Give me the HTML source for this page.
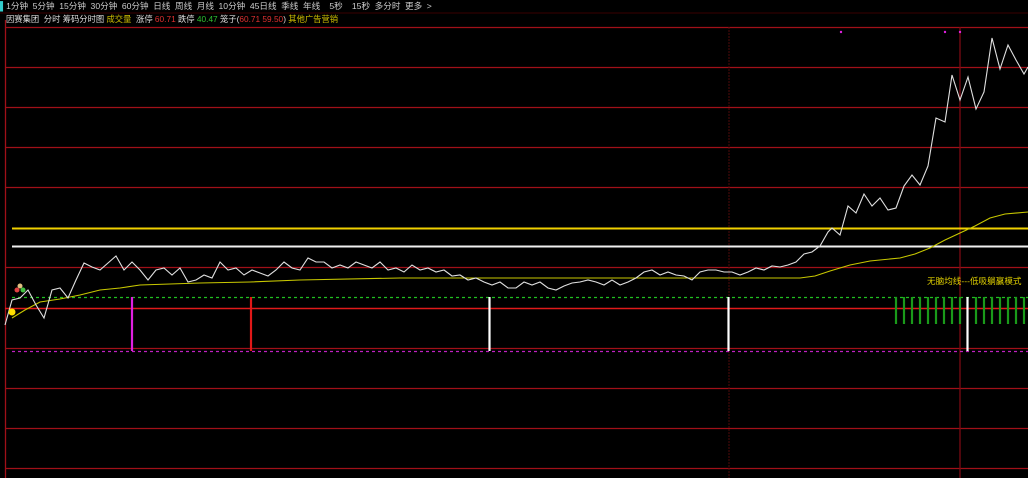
<!DOCTYPE html>
<html><head><meta charset="utf-8"><style>
html,body{margin:0;padding:0;background:#000;width:1028px;height:478px;overflow:hidden}
.t{position:absolute;font-family:"Liberation Sans","Noto Sans CJK SC",sans-serif;font-size:8.6px;white-space:nowrap;line-height:12px}
</style></head><body>
<svg width="1028" height="478" style="position:absolute;left:0;top:0" xmlns="http://www.w3.org/2000/svg">
<rect width="1028" height="478" fill="#000"/>
<line x1="0" y1="13" x2="1028" y2="13" stroke="#3a0000" stroke-width="1"/>
<g stroke="#a01018" stroke-width="1.3">
<line x1="5" y1="27.5" x2="1028" y2="27.5"/>
<line x1="5" y1="67.5" x2="1028" y2="67.5"/>
<line x1="5" y1="107.5" x2="1028" y2="107.5"/>
<line x1="5" y1="147.5" x2="1028" y2="147.5"/>
<line x1="5" y1="187.5" x2="1028" y2="187.5"/>
<line x1="5" y1="267.5" x2="1028" y2="267.5"/>
<line x1="5" y1="348.5" x2="1028" y2="348.5"/>
<line x1="5" y1="388.5" x2="1028" y2="388.5"/>
<line x1="5" y1="428.5" x2="1028" y2="428.5"/>
<line x1="5" y1="468.5" x2="1028" y2="468.5"/>
<line x1="5.5" y1="20" x2="5.5" y2="478"/>
</g>
<line x1="5" y1="308.5" x2="1028" y2="308.5" stroke="#e01a1a" stroke-width="1.4"/>
<line x1="729" y1="27" x2="729" y2="478" stroke="#500a0a" stroke-width="1" stroke-dasharray="2,1"/>
<line x1="960" y1="27" x2="960" y2="478" stroke="#7a0a12" stroke-width="1.3"/>
<line x1="12" y1="228.5" x2="1028" y2="228.5" stroke="#f0d000" stroke-width="2"/>
<line x1="12" y1="246.5" x2="1028" y2="246.5" stroke="#f0f0f0" stroke-width="2"/>
<line x1="12" y1="297.5" x2="1028" y2="297.5" stroke="#20c020" stroke-width="1.2" stroke-dasharray="3,3"/>
<line x1="12" y1="351.5" x2="1028" y2="351.5" stroke="#c020c0" stroke-width="1.2" stroke-dasharray="3,3"/>
<g stroke="#1a9a1a" stroke-width="2.2">
<line x1="896" y1="297" x2="896" y2="324"/><line x1="904" y1="297" x2="904" y2="324"/><line x1="912" y1="297" x2="912" y2="324"/><line x1="920" y1="297" x2="920" y2="324"/><line x1="928" y1="297" x2="928" y2="324"/><line x1="936" y1="297" x2="936" y2="324"/><line x1="944" y1="297" x2="944" y2="324"/><line x1="952" y1="297" x2="952" y2="324"/><line x1="960" y1="297" x2="960" y2="324"/><line x1="976" y1="297" x2="976" y2="324"/><line x1="984" y1="297" x2="984" y2="324"/><line x1="992" y1="297" x2="992" y2="324"/><line x1="1000" y1="297" x2="1000" y2="324"/><line x1="1008" y1="297" x2="1008" y2="324"/><line x1="1016" y1="297" x2="1016" y2="324"/><line x1="1024" y1="297" x2="1024" y2="324"/>
</g>
<g stroke-width="2.2">
<line x1="132" y1="297" x2="132" y2="351" stroke="#e020e0"/>
<line x1="251" y1="297" x2="251" y2="351" stroke="#e01818"/>
<line x1="489.5" y1="297" x2="489.5" y2="351" stroke="#fff"/>
<line x1="728.5" y1="297" x2="728.5" y2="351" stroke="#fff"/>
<line x1="967.5" y1="297" x2="967.5" y2="351" stroke="#fff"/>
</g>
<polyline fill="none" stroke="#c8c800" stroke-width="1.1" points="12,318 25,310 40,302 60,299 80,295 100,290 120,288 140,285 200,283 250,282 300,280 400,278 500,278 600,278 700,278 800,278 815,276 830,271 850,265 870,261 900,258 915,254 930,248 945,240 960,233 975,226 990,218 1005,214 1028,212"/>
<polyline fill="none" stroke="#e0e0e0" stroke-width="1.1" points="5,325 12,300 20,298 28,290 36,305 44,318 52,290 60,288 68,298 76,280 84,263 92,267 100,270 108,263 116,256 124,270 132,262 140,270 148,280 156,270 164,268 172,275 180,268 188,282 196,280 204,275 212,278 220,262 228,270 236,268 244,275 252,270 260,273 268,276 276,270 284,262 292,268 300,270 308,258 316,262 324,262 332,268 340,265 348,268 356,262 364,265 372,268 380,262 388,270 396,268 404,272 412,265 420,270 428,268 436,272 444,270 452,276 460,275 468,280 476,278 484,282 492,285 500,282 508,288 516,288 524,282 532,285 540,282 548,288 556,290 564,286 572,283 580,282 588,280 596,282 604,285 612,280 620,285 628,282 636,278 644,272 652,270 660,275 668,272 676,275 684,276 692,280 700,272 708,270 716,270 724,272 732,272 740,275 748,272 756,268 764,270 772,266 780,267 788,265 796,262 804,254 812,252 820,246 828,232 832,228 840,235 848,206 856,213 864,194 872,206 880,198 888,210 896,208 904,186 912,175 920,185 928,166 936,118 945,122 952,75 960,100 968,77 976,109 984,92 992,38 1000,69 1008,45 1016,60 1024,74 1028,67"/>
<circle cx="12" cy="312" r="3.5" fill="#ffe000"/>
<circle cx="20" cy="286" r="2.5" fill="#e0c080"/>
<circle cx="17" cy="290" r="2.5" fill="#e04040"/>
<circle cx="23" cy="290" r="2.5" fill="#40c040"/>
<circle cx="841" cy="32" r="1.2" fill="#e020e0"/>
<circle cx="945" cy="32" r="1.2" fill="#e020e0"/>
<circle cx="960" cy="32" r="1.2" fill="#e020e0"/>
</svg>
<div class="t" style="left:0;top:0;color:#ccc;word-spacing:2.2px"><span style="color:#3cc">▌</span>1分钟 5分钟 15分钟 30分钟 60分钟 日线 周线 月线 10分钟 45日线 季线 年线&nbsp; 5秒&nbsp; 15秒 多分时 更多 &gt;</div>
<div class="t" style="left:6px;top:13px;color:#ddd;font-size:8.3px">因赛集团&nbsp; 分时 筹码分时图 <span style="color:#d0c000">成交量</span>&nbsp; 涨停 <span style="color:#e03030">60.71</span> 跌停 <span style="color:#30c030">40.47</span> 笼子(<span style="color:#e03030">60.71 59.50</span>) <span style="color:#d0c000">其他广告营销</span></div>
<div class="t" style="left:927px;top:275px;color:#e0d000;font-size:8.6px">无脑均线---低吸躺赢模式</div>
</body></html>
